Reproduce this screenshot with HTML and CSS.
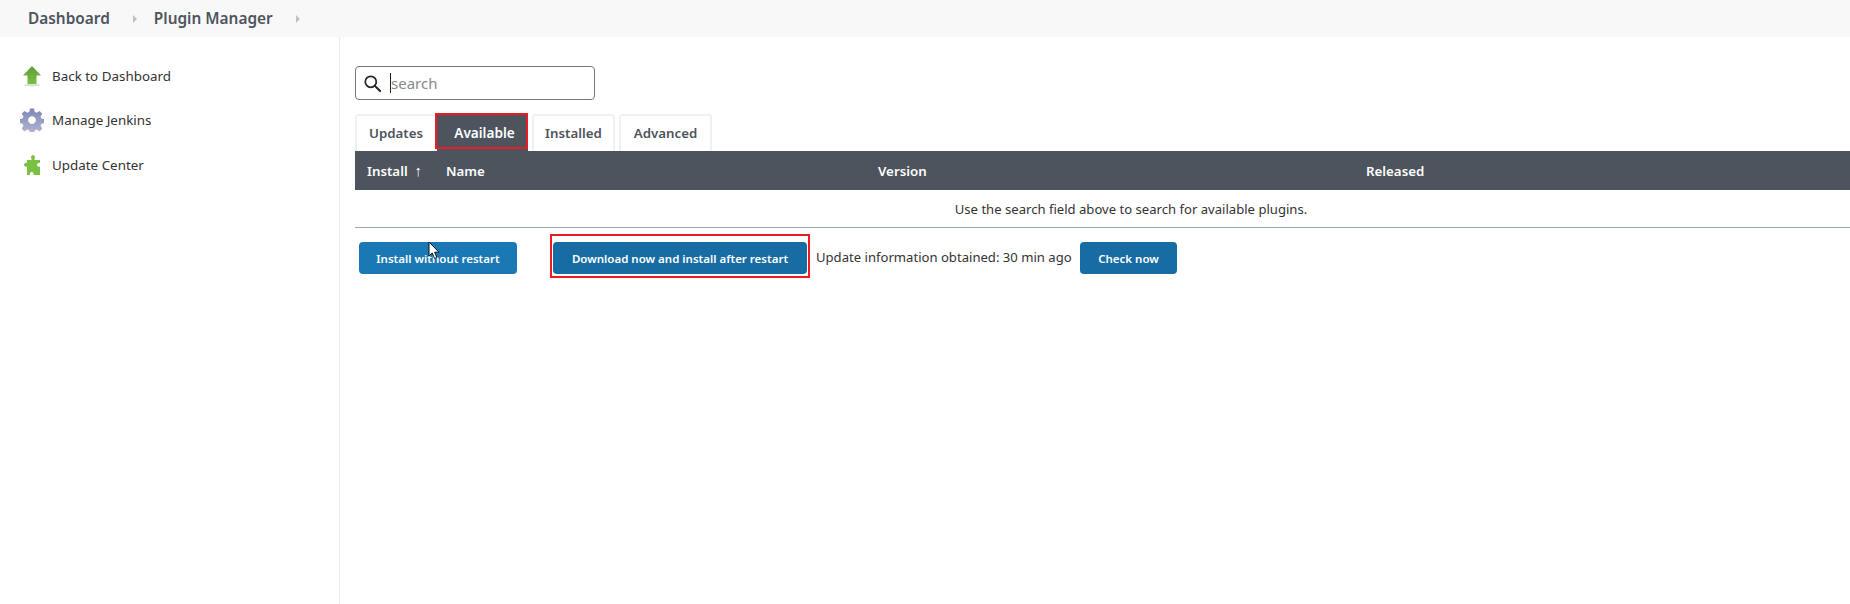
FILE: index.html
```html
<!DOCTYPE html>
<html lang="en">
<head>
<meta charset="utf-8">
<title>Plugin Manager</title>
<link rel="stylesheet" href="styles.css">
</head>
<body>
<nav class="topbar">
  <a class="crumb">Dashboard</a>
  <span class="sep"></span>
  <a class="crumb">Plugin Manager</a>
  <span class="sep"></span>
</nav>
<div class="layout">
  <aside class="sidebar">
    <a class="side-item">
      <svg class="side-icon" viewBox="0 0 24 24"><defs><linearGradient id="ga" x1="0" y1="0" x2="0" y2="1"><stop offset="0" stop-color="#5c9a33"/><stop offset="1" stop-color="#7cc142"/></linearGradient></defs><ellipse cx="12" cy="21" rx="8" ry="1.5" fill="#ddd"/><path d="M12 2 21 11.500H16.500V20H7.500V11.500H3Z" fill="url(#ga)"/></svg>
      <span>Back to Dashboard</span>
    </a>
    <a class="side-item">
      <svg class="side-icon" viewBox="0 0 24 24"><defs><linearGradient id="gg" x1="0" y1="0" x2="0" y2="1"><stop offset="0" stop-color="#7c88b4"/><stop offset="1" stop-color="#b4b6d0"/></linearGradient></defs><path fill-rule="evenodd" d="M10 0.500h4l.7 3.300 2 .9 2.900-1.800 2.700 2.800-1.800 2.800.9 2 3.300.7v3.900l-3.300.7-.9 2 1.800 2.800-2.700 2.800-2.900-1.800-2 .9-.7 3.300h-4l-.7-3.300-2-.9-2.900 1.800-2.700-2.800 1.800-2.800-.9-2-3.300-.7v-3.900l3.300-.7.9-2-1.800-2.800 2.700-2.800 2.900 1.800 2-.9zM12 8.200a3.900 3.900 0 1 0 .01 0z" fill="url(#gg)"/></svg>
      <span>Manage Jenkins</span>
    </a>
    <a class="side-item">
      <svg class="side-icon" viewBox="0 0 24 24"><path d="M7 7H11.500V5.500a2 2 0 1 1 3 0V7H20V10a2 2 0 1 0 0 3.500V22H13.500a2 2 0 1 0-3.500 0H7V13.500a2 2 0 1 1 0-3.500Z" fill="#7ac143"/></svg>
      <span>Update Center</span>
    </a>
  </aside>
  <main class="content">
    <div class="search">
      <svg class="search-icon" viewBox="0 0 20 20"><circle cx="8.200" cy="8.200" r="5.800" fill="none" stroke="#222" stroke-width="1.800"/><path d="M12.500 12.500 18 18" stroke="#222" stroke-width="2.200" stroke-linecap="round"/></svg>
      <span class="caret"></span>
      <span class="placeholder">search</span>
    </div>
    <div class="tabs">
      <a class="tab tab-first">Updates</a>
      <a class="tab tab-active">Available</a>
      <a class="tab">Installed</a>
      <a class="tab tab-last">Advanced</a>
    </div>
    <div class="table">
      <div class="thead">
        <span>Install&nbsp; <span class="arrow">↑</span></span>
        <span>Name</span>
        <span>Version</span>
        <span>Released</span>
      </div>
      <div class="empty">Use the search field above to search for available plugins.</div>
    </div>
    <div class="actions">
      <button class="btn btn-light">Install without restart</button>
      <div class="highlight"><button class="btn btn-download">Download now and install after restart</button></div>
      <span class="info">Update information obtained: 30 min ago</span>
      <button class="btn btn-check">Check now</button>
    </div>
    <svg class="cursor" viewBox="0 0 12 19"><path d="M1 1V15L4.200 12 6.600 17.500 9 16.500 6.600 11.200H11Z" fill="#fff" stroke="#111" stroke-width="1"/></svg>
  </main>
</div>
</body>
</html>
```
FILE: styles.css
```css
* { box-sizing: border-box; }
html, body { margin: 0; height: 100%; overflow: hidden; }
body {
  width: 1850px;
  height: 604px;
  background: #fff;
  color: #333;
  font-family: "Noto Sans", "Open Sans", sans-serif;
  font-size: 13.300px;
  display: flex;
  flex-direction: column;
}
.topbar {
  height: 37px;
  flex: none;
  background: #f8f8f8;
  display: flex;
  align-items: center;
  padding-left: 28px;
  color: #4d545d;
  font-size: 15.400px;
  font-weight: 600;
}
.sep {
  width: 0;
  height: 0;
  border-left: 4px solid #c0c0c0;
  border-top: 4px solid transparent;
  border-bottom: 4px solid transparent;
  margin-left: 23px;
  margin-right: 17px;
}
.layout { flex: 1; display: flex; min-height: 0; }
.sidebar {
  width: 340px;
  flex: none;
  border-right: 1px solid #eaeaea;
  padding-top: 17px;
}
.side-item {
  height: 44.250px;
  display: flex;
  align-items: center;
  padding-left: 20px;
  gap: 8px;
  color: #333;
  font-size: 13.400px;
}
.side-icon { width: 24px; height: 24px; flex: none; }
.content {
  position: relative;
  flex: 1;
  min-width: 0;
  padding: 29px 0 0 15px;
}
.search {
  width: 240px;
  height: 34px;
  border: 1px solid #777;
  border-radius: 4px;
  display: flex;
  align-items: center;
  padding-left: 7px;
}
.search-icon { width: 19px; height: 19px; flex: none; }
.caret { width: 1px; height: 20px; background: #222; margin-left: 8px; }
.placeholder { color: #8a8a8a; font-size: 15px; }
.tabs { display: flex; gap: 4px; margin-top: 14px; height: 37px; }
.tab {
  position: relative;
  height: 37px;
  width: 83px;
  border: 2px solid #eef1f4;
  border-bottom: 0;
  border-radius: 3px 3px 0 0;
  display: flex;
  align-items: center;
  justify-content: center;
  padding-bottom: 2px;
  color: #4d545d;
  font-weight: 600;
}
.tab-first { width: 82px; margin-right: -4px; }
.tab-active {
  width: 91px;
  padding-left: 4px;
  background: #4d545d;
  border-color: #4d545d;
  border-radius: 0;
  color: #fff;
  font-size: 13.600px;
}
.tab-active::after {
  content: "";
  box-sizing: border-box;
  position: absolute;
  left: -4px;
  top: -3px;
  width: 93px;
  height: 36px;
  border: 2px solid #ed1c24;
}
.tab-last { width: 93px; }
.table {
  width: 1552px;
  border-bottom: 1px solid #9aa5ae;
}
.thead {
  height: 39px;
  background: #4d545d;
  color: #fff;
  font-weight: 600;
  display: grid;
  grid-template-columns: 79px 432px 488px 1fr;
  align-items: center;
  padding-left: 12px;
}
.arrow { font-size: 15px; line-height: 1; }
.empty {
  height: 37px;
  display: flex;
  align-items: center;
  justify-content: center;
  color: #333;
  font-size: 13.100px;
}
.actions {
  display: flex;
  align-items: flex-start;
  margin-top: 6px;
  padding-left: 4px;
}
.btn {
  height: 32px;
  margin-top: 8px;
  border: 0;
  border-radius: 4px;
  color: #fff;
  font: 600 11.500px "Noto Sans", "Open Sans", sans-serif;
  padding: 0;
}
.btn-light { width: 158px; background: #1a78b4; margin-right: 33px; }
.highlight {
  width: 260px;
  height: 44px;
  border: 2px solid #ed1c24;
  padding: 0 1px;
}
.btn-download { display: block; width: 100%; margin-top: 6px; background: #176ca3; }
.info { width: 264px; margin: 8px 0 0 6px; line-height: 30px; color: #333; font-size: 13.100px; white-space: nowrap; }
.btn-check { width: 97px; background: #176ca3; }
.cursor {
  position: absolute;
  left: 88px;
  top: 204px;
  width: 12px;
  height: 19px;
}
```
